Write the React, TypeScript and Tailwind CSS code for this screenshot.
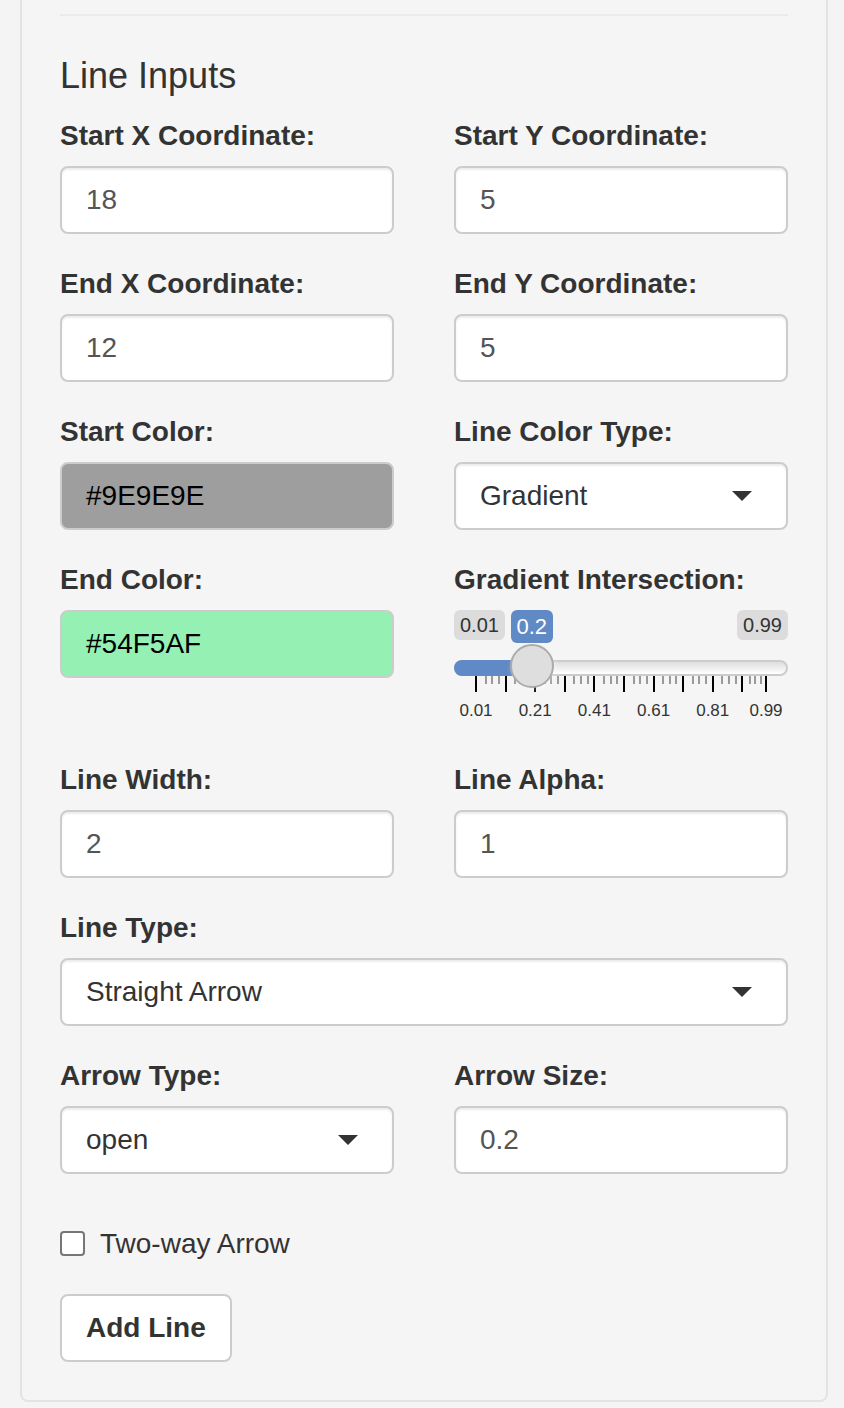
import type { ReactNode } from 'react';

// slider geometry (px, relative to the slider box)
const TRACK_LEFT = 22;
const TRACK_WIDTH = 290;
const HANDLE = 78;

const majors = [0, 1, 2, 3, 4, 5, 6, 7, 8, 9].map((k) => TRACK_LEFT + (TRACK_WIDTH * k * 0.1) / 0.98).concat(TRACK_LEFT + TRACK_WIDTH);

const minors = majors.slice(1).flatMap((b, i) => {
  const w = b - majors[i];
  return [1, 2, 3].map((z) => b - w * 0.225 * z);
});

const gridLabels = [
  { text: '0.01', x: majors[0] },
  { text: '0.21', x: majors[2] },
  { text: '0.41', x: majors[4] },
  { text: '0.61', x: majors[6] },
  { text: '0.81', x: majors[8] },
  { text: '0.99', x: majors[10] },
];

function Label({ children }: { children: ReactNode }) {
  return <div className="mb-[10px] text-[28px] font-bold leading-[40px] text-[#333]">{children}</div>;
}

function TextBox({ value }: { value: string }) {
  return (
    <div className="flex h-[68px] items-center rounded-[8px] border-2 border-[#ccc] bg-white px-[24px] text-[28px] text-[#555] shadow-[inset_0_2px_2px_rgba(0,0,0,0.075)]">
      {value}
    </div>
  );
}

function ColorBox({ value, bg }: { value: string; bg: string }) {
  return (
    <div className={`flex h-[68px] items-center rounded-[8px] border-2 border-[#ccc] px-[24px] text-[28px] text-black ${bg}`}>
      {value}
    </div>
  );
}

function SelectBox({ value }: { value: string }) {
  return (
    <div className="flex h-[68px] items-center justify-between rounded-[8px] border-2 border-[#ccc] bg-white pl-[24px] pr-[34px] text-[28px] text-[#333] shadow-[inset_0_2px_2px_rgba(0,0,0,0.075)]">
      <span>{value}</span>
      <span className="h-0 w-0 border-x-[10px] border-t-[10px] border-x-transparent border-t-[#333]" />
    </div>
  );
}

function Field({ label, children }: { label: string; children: ReactNode }) {
  return (
    <div className="mb-[30px]">
      <Label>{label}</Label>
      {children}
    </div>
  );
}

function Slider() {
  return (
    <div className="relative h-[120px]">
      <div className="absolute left-0 top-0 rounded-[6px] bg-[#dcdcdc] px-[6px] py-[2px] text-[20px] leading-[26.7px] text-[#333]">
        0.01
      </div>
      <div className="absolute right-0 top-0 rounded-[6px] bg-[#dcdcdc] px-[6px] py-[2px] text-[20px] leading-[26.7px] text-[#333]">
        0.99
      </div>
      <div className="absolute left-[56.5px] top-0 rounded-[6px] bg-[#5f8ac6] px-[6px] py-[2px] text-[22px] leading-[29.3px] text-white">
        0.2
      </div>
      <div className="absolute left-0 right-0 top-[50px] h-[16px] rounded-[16px] border-2 border-[#ccc] bg-gradient-to-b from-[#dedede] to-white" />
      <div className="absolute left-0 top-[50px] h-[16px] w-[80px] rounded-l-[16px] bg-[#5f8ac6]" />
      {minors.map((x, i) => (
        <span key={`m${i}`} className="absolute top-[66px] h-[8px] w-[2px] bg-[#9a9a9a]" style={{ left: x - 1 }} />
      ))}
      {majors.map((x, i) => (
        <span key={`M${i}`} className="absolute top-[66px] h-[16px] w-[2px] bg-black" style={{ left: x - 1 }} />
      ))}
      {gridLabels.map((g) => (
        <span
          key={g.text}
          className="absolute top-[90px] w-[60px] -translate-x-1/2 text-center text-[17px] leading-[22px] text-[#333]"
          style={{ left: g.x }}
        >
          {g.text}
        </span>
      ))}
      <div
        className="absolute top-[34px] h-[44px] w-[44px] rounded-full border-2 border-[#ababab] bg-[#dedede] shadow-[2px_2px_6px_rgba(255,255,255,0.3)]"
        style={{ left: HANDLE - 22 }}
      />
    </div>
  );
}

export default function App() {
  return (
    <div className="min-h-[1408px] bg-[#f4f4f4] font-['Liberation_Sans',Arial,sans-serif]">
      <div className="ml-[20px] w-[808px] rounded-b-[8px] border-x-2 border-b-2 border-[#e3e3e3] bg-[#f5f5f5] px-[38px] pb-[38px] pt-[14px]">
        <hr className="border-0 border-t-2 border-[#ebebeb]" />

        <h4 className="mb-[20px] mt-[40px] text-[36px] font-normal leading-[39.6px] text-[#333]">Line Inputs</h4>

        <div className="grid grid-cols-2 gap-x-[60px]">
          <Field label="Start X Coordinate:">
            <TextBox value="18" />
          </Field>
          <Field label="Start Y Coordinate:">
            <TextBox value="5" />
          </Field>

          <Field label="End X Coordinate:">
            <TextBox value="12" />
          </Field>
          <Field label="End Y Coordinate:">
            <TextBox value="5" />
          </Field>

          <Field label="Start Color:">
            <ColorBox value="#9E9E9E" bg="bg-[#9e9e9e]" />
          </Field>
          <Field label="Line Color Type:">
            <SelectBox value="Gradient" />
          </Field>

          <Field label="End Color:">
            <ColorBox value="#54F5AF" bg="bg-[#95f1b3]" />
          </Field>
          <Field label="Gradient Intersection:">
            <Slider />
          </Field>

          <Field label="Line Width:">
            <TextBox value="2" />
          </Field>
          <Field label="Line Alpha:">
            <TextBox value="1" />
          </Field>
        </div>

        <Field label="Line Type:">
          <SelectBox value="Straight Arrow" />
        </Field>

        <div className="grid grid-cols-2 gap-x-[60px]">
          <Field label="Arrow Type:">
            <SelectBox value="open" />
          </Field>
          <Field label="Arrow Size:">
            <TextBox value="0.2" />
          </Field>
        </div>

        <div className="mb-[30px] mt-[20px] flex h-[40px] items-center gap-[15px] text-[28px] text-[#333]">
          <span className="h-[25px] w-[25px] rounded-[4px] border-2 border-[#767676] bg-white" />
          <span>Two-way Arrow</span>
        </div>

        <button className="h-[68px] rounded-[8px] border-2 border-[#ccc] bg-white px-[24px] text-[28px] font-bold text-[#333]">
          Add Line
        </button>
      </div>
    </div>
  );
}
